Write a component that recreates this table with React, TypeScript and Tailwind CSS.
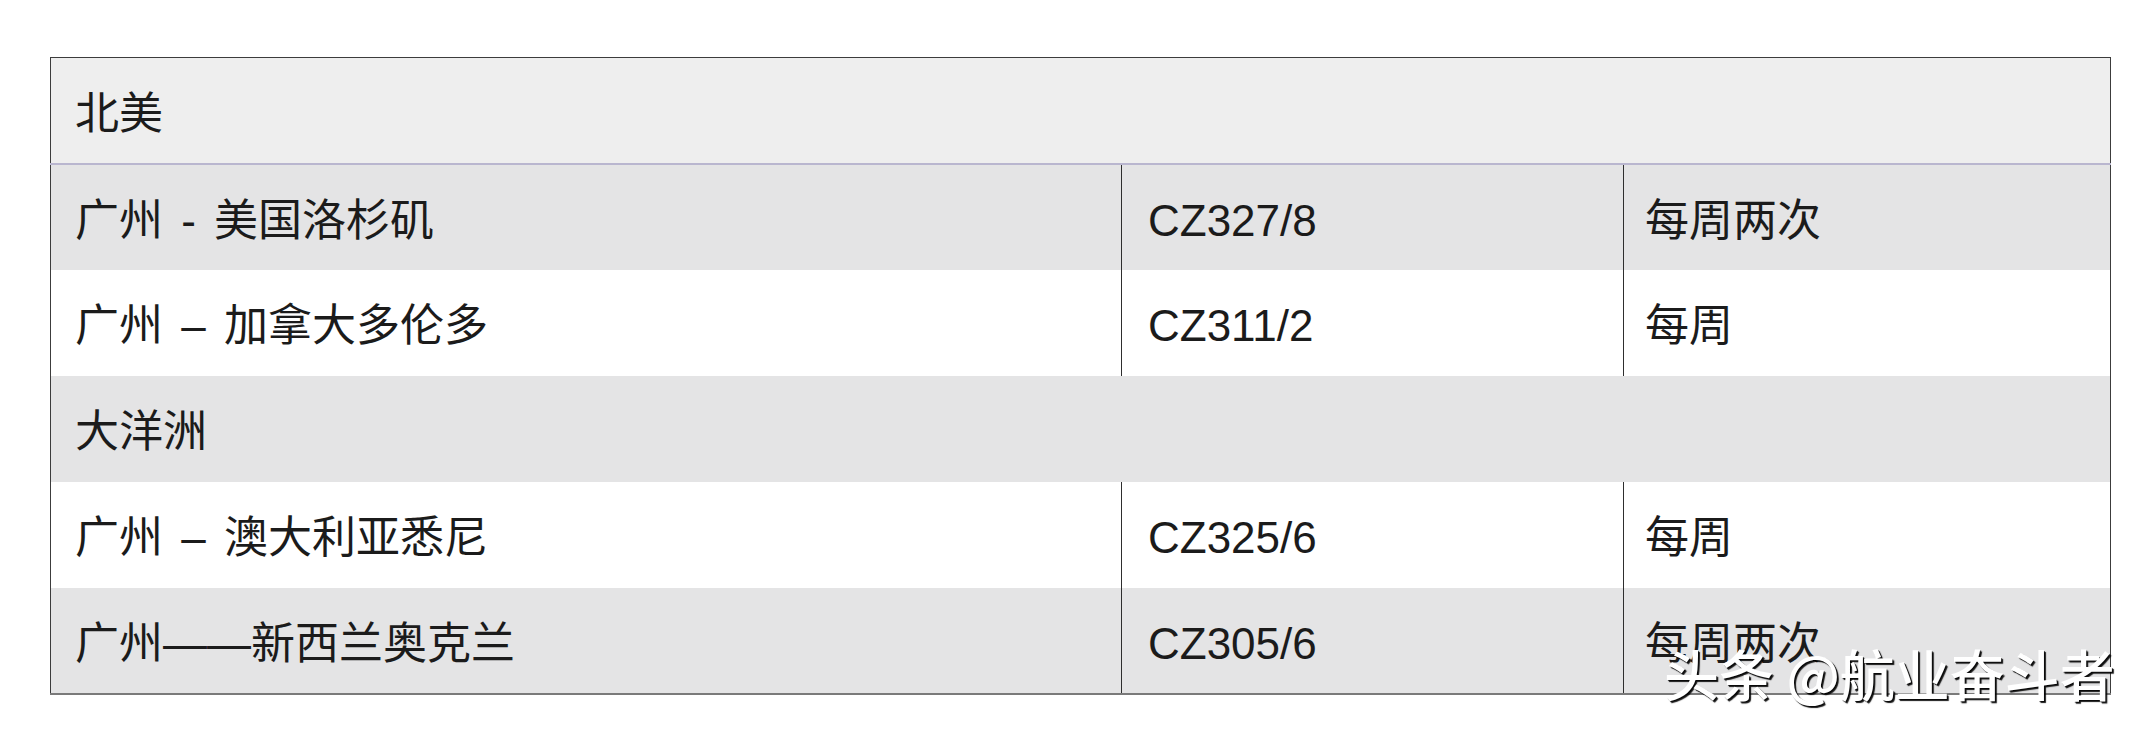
import React from "react";

type Row =
  | { kind: "region"; label: string; bg: string; first?: boolean }
  | { kind: "route"; route: string; flight: string; freq: string; bg: string };

const rows: Row[] = [
  { kind: "region", label: "北美", bg: "bg-[#eeeeee]", first: true },
  { kind: "route", route: "广州 - 美国洛杉矶", flight: "CZ327/8", freq: "每周两次", bg: "bg-[#e4e4e5]" },
  { kind: "route", route: "广州 – 加拿大多伦多", flight: "CZ311/2", freq: "每周", bg: "bg-white" },
  { kind: "region", label: "大洋洲", bg: "bg-[#e4e4e5]" },
  { kind: "route", route: "广州 – 澳大利亚悉尼", flight: "CZ325/6", freq: "每周", bg: "bg-white" },
  { kind: "route", route: "广州——新西兰奥克兰", flight: "CZ305/6", freq: "每周两次", bg: "bg-[#e4e4e5]" },
];

export default function App() {
  return (
    <div className="relative w-[2135px] h-[732px] bg-white pt-[57px] pl-[50px] font-['Liberation_Sans','Noto_Sans_CJK_SC',sans-serif] text-[#1b1b1b]">
      <table className="w-[2061px] table-fixed border-collapse border border-[#3c3c3c] border-b-2 border-b-[#7a7a7a] text-[44px] leading-none">
        <colgroup>
          <col className="w-[1071px]" />
          <col className="w-[502px]" />
          <col />
        </colgroup>
        <tbody>
          {rows.map((r, i) =>
            r.kind === "region" ? (
              <tr
                key={i}
                className={`${r.bg} h-[106px] ${r.first ? "border-b-2 border-b-[#b9b6cf]" : ""}`}
              >
                <td colSpan={3} className="pl-6 pt-[7px] align-middle">
                  {r.label}
                </td>
              </tr>
            ) : (
              <tr key={i} className={`${r.bg} h-[106px]`}>
                <td className="pl-6 pt-[7px] align-middle whitespace-pre [word-spacing:6px]">{r.route}</td>
                <td className="pl-[26px] pt-[7px] align-middle border-l border-[#2e2e2e]">{r.flight}</td>
                <td className="pl-[21px] pt-[7px] align-middle border-l border-[#2e2e2e]">{r.freq}</td>
              </tr>
            )
          )}
        </tbody>
      </table>
      <div className="absolute left-[1664px] top-[645px] text-[55px] leading-none text-white font-['Noto_Sans_CJK_SC',sans-serif] font-medium [text-shadow:2px_2px_1px_rgba(0,0,0,0.9),1px_1px_0_rgba(0,0,0,0.6)] whitespace-pre">
        头条 @航业奋斗者
      </div>
    </div>
  );
}
